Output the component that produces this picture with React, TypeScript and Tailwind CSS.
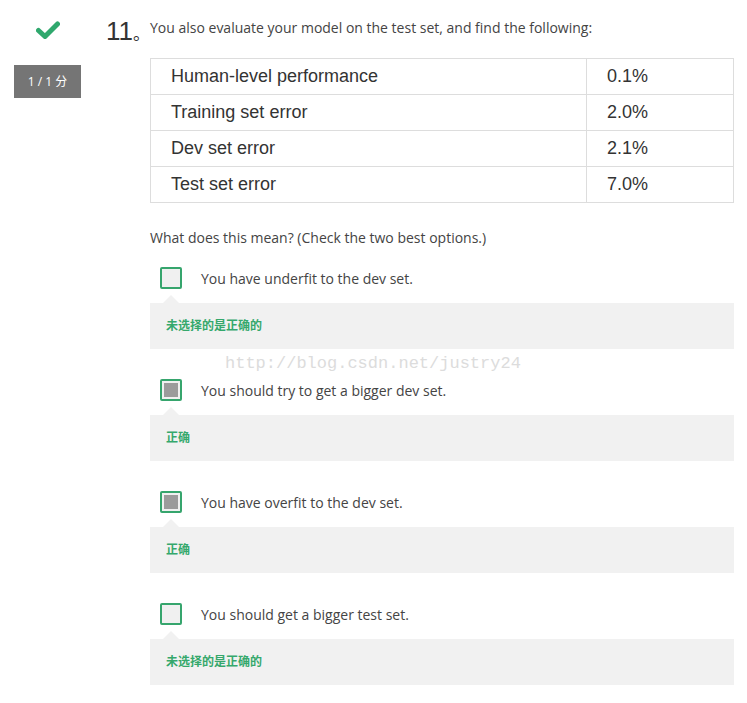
import React from 'react';

const rows = [
  ['Human-level performance', '0.1%'],
  ['Training set error', '2.0%'],
  ['Dev set error', '2.1%'],
  ['Test set error', '7.0%'],
];

const options = [
  { text: 'You have underfit to the dev set.', checked: false, feedback: '未选择的是正确的' },
  { text: 'You should try to get a bigger dev set.', checked: true, feedback: '正确' },
  { text: 'You have overfit to the dev set.', checked: true, feedback: '正确' },
  { text: 'You should get a bigger test set.', checked: false, feedback: '未选择的是正确的' },
];

const sans = { fontFamily: '"Open Sans", "Noto Sans CJK SC", sans-serif' };

const Option = ({ text, checked, feedback }: { text: string; checked: boolean; feedback: string }) => (
  <div className="mb-[30px]">
    <div className="flex items-center h-[22px] pl-[10px]">
      <div className="w-[22px] h-[22px] rounded-[2px] border-2 border-[#36a56d] bg-[#f0f0f0] flex items-center justify-center">
        {checked && <div className="w-[14px] h-[14px] bg-[#9b9b9b]" />}
      </div>
      <span className="ml-[19px] text-[14px] text-[#444]">{text}</span>
    </div>
    <div className="relative mt-[14px] h-[46px] bg-[#f1f1f1] flex items-center pl-4">
      <div className="absolute -top-[8px] left-[13px] w-0 h-0 border-l-[8px] border-r-[8px] border-b-[8px] border-l-transparent border-r-transparent border-b-[#f1f1f1]" />
      <span className="text-[12px] font-bold text-[#35a86c]">{feedback}</span>
    </div>
  </div>
);

export default function App() {
  return (
    <div className="relative bg-white w-[747px] h-[703px] pt-[16px] flex" style={sans}>
      <div className="w-[67px] ml-[14px] flex flex-col items-center">
        <svg width="24" height="18" viewBox="0 0 24 18" className="mt-[5px]">
          <path d="M2.5 9.5 L9 15.5 L21.5 3" fill="none" stroke="#2fa86d" strokeWidth="5" strokeLinecap="round" strokeLinejoin="round" />
        </svg>
        <div className="mt-[26px] w-[67px] h-[33px] bg-[#757575] text-white text-[12px] flex items-center justify-center">
          1 / 1 分
        </div>
      </div>
      <div className="ml-[25px] w-[44px] text-[26px] leading-[30px] text-[#333] whitespace-nowrap" style={{ fontFamily: '"Liberation Sans", "Noto Sans CJK SC", sans-serif' }}>
        11<span className="text-[17px]">。</span>
      </div>
      <div className="w-[584px]">
        <p className="text-[14px] text-[#444] leading-[24px]">You also evaluate your model on the test set, and find the following:</p>
        <table className="mt-[18px] w-full border-collapse text-[18px] text-[#333]" style={{ fontFamily: '"Liberation Sans", sans-serif' }}>
          <tbody>
            {rows.map(([a, b]) => (
              <tr key={a} className="h-[36px]">
                <td className="border border-[#ddd] pl-[20px] w-[436px]">{a}</td>
                <td className="border border-[#ddd] pl-[20px]">{b}</td>
              </tr>
            ))}
          </tbody>
        </table>
        <p className="mt-[24px] text-[14px] text-[#444] leading-[22px]">What does this mean? (Check the two best options.)</p>
        <div className="mt-[18px]">
          {options.map((o) => (
            <Option key={o.text} {...o} />
          ))}
        </div>
      </div>
      <div className="absolute left-[225px] top-[351px] text-[17px] text-[#dcdcdc]" style={{ fontFamily: '"Liberation Mono", monospace' }}>
        http://blog.csdn.net/justry24
      </div>
    </div>
  );
}
